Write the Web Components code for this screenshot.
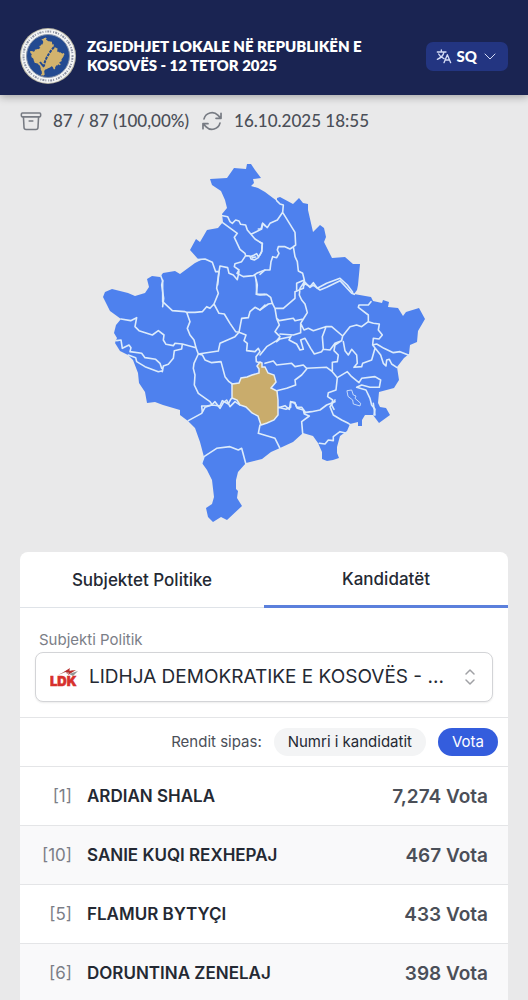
<!DOCTYPE html>
<html lang="sq">
<head>
<meta charset="utf-8">
<meta name="viewport" content="width=device-width, initial-scale=1">
<title>Zgjedhjet Lokale 2025</title>
<style>
  html {
    scrollbar-width: none;
  }

  body {
    margin: 0;
    background: #e9e9ea;
    color: #242933;
    font-family: Inter, "Liberation Sans", sans-serif;
  }

  main {
    padding: 16px 20px 0;
  }
</style>
</head>
<body>
<site-header>
  <span>ZGJEDHJET LOKALE NË REPUBLIKËN E KOSOVËS - 12 TETOR 2025</span>
  <language-button slot="action">SQ</language-button>
</site-header>
<main>
  <count-status>
    <span slot="counted">87 / 87 (100,00%)</span>
    <time slot="updated" datetime="2025-10-16T18:55">16.10.2025 18:55</time>
  </count-status>
  <municipality-map></municipality-map>
  <results-card>
    <party-select slot="filter"></party-select>
    <sort-bar slot="filter"></sort-bar>
    <candidate-table></candidate-table>
  </results-card>
</main>

<script>
const KOSOVO_OUTLINE = `M210 179 227 178 234 168 246 169 247 164 251 164 255 170 261 178 253 179 254 183 251 186
  258 188 265 192 277 201 277 198 280 197 293 204 299 198 303 203 308 204 308 210 313 232 320 225 324 228 326 237
  324 242 332 258 345 257 353 264 360 264 358 285 357 290 354 294 371 297 373 301 382 303 383 300 389 302 388 307
  398 308 403 316 406 312 419 308 425 319 418 331 417 342 410 345 409 354 404 358 397 367 399 380 394 388 379 392
  378 403 380 407 386 408 390 415 379 423 373 415 365 415 362 420 362 426 358 426 358 422 350 424 347 431 340 436
  337 447 337 453 339 458 333 460 327 461 322 459 322 452 318 443 313 436 303 433 293 442 280 448 271 452 262 459
  246 463 238 472 236 480 236 489 238 491 237 498 242 506 227 520 221 517 213 522 208 517 206 508 212 504 214 497
  212 480 207 470 202 463 204 457 200 442 195 428 188 421 180 415 180 410 163 405 155 402 147 403 145 392 139 383
  138 373 133 360 128 355 120 351 115 343 117 338 114 333 116 325 121 319 110 311 107 305 103 297 105 292 112 289
  128 293 135 296 145 293 149 287 147 279 152 276 160 277 163 273 175 271 180 274 195 263 201 260 198 259 190 250
  196 239 200 242 207 230 218 228 223 222 222 214 227 208 225 200 221 191 212 185Z`;

class SiteHeader extends HTMLElement {
  constructor() {
    super();
    this.attachShadow({ mode: 'open' });
  }

  connectedCallback() {
    this.shadowRoot.innerHTML = `
      <style>
        :host {
          display: block;
          background: #1a2452;
          color: #fff;
          box-shadow: 0 2px 8px rgba(0, 0, 0, 0.3);
        }

        header {
          display: flex;
          align-items: center;
          gap: 11px;
          padding: 28px 20px 11px;
        }

        svg {
          flex: none;
          width: 56px;
          height: 56px;
        }

        h1 {
          flex: 1;
          margin: 0;
          max-width: 296px;
          font: 800 15px/19px Lato, "Open Sans", sans-serif;
        }

        slot[name=action] {
          display: block;
          margin-left: auto;
        }
      </style>
      <header>
        <svg viewBox="0 0 56 56" aria-hidden="true">
          <circle cx="28" cy="28" r="28" fill="#b9b6a5"/>
          <circle cx="28" cy="28" r="27" fill="#f4f5f5"/>
          <circle cx="28" cy="28" r="24.5" fill="none" stroke="#8d93a3" stroke-width="2" stroke-dasharray="1 1 2 1 1 2"/>
          <circle cx="28" cy="28" r="21.5" fill="#234a91" stroke="#8794aa"/>
          <g transform="translate(-1 -8) scale(.107)">
            <path d="${KOSOVO_OUTLINE}" fill="#d2b36d"/>
          </g>
          <path d="M34 19C29 25 25 31 24 38" fill="none" stroke="#234a91" stroke-width="2" stroke-dasharray="3 1"/>
          <path d="M20 34l4 5" fill="none" stroke="#234a91" stroke-width="2"/>
        </svg>
        <h1><slot></slot></h1>
        <slot name="action"></slot>
      </header>
    `;
  }
}

class LanguageButton extends HTMLElement {
  constructor() {
    super();
    this.attachShadow({ mode: 'open' });
  }

  connectedCallback() {
    this.shadowRoot.innerHTML = `
      <style>
        :host {
          display: block;
        }

        button {
          display: flex;
          align-items: center;
          gap: 5px;
          height: 29px;
          padding: 0 10px;
          border: 0;
          border-radius: 7px;
          background: #233581;
          color: #fff;
          font: 900 15px/19px Lato, sans-serif;
        }

        svg {
          fill: none;
          stroke: #d5dcf5;
          stroke-linecap: round;
          stroke-linejoin: round;
        }
      </style>
      <button type="button">
        <svg width="16" height="16" viewBox="0 0 24 24" stroke-width="2" aria-hidden="true">
          <path d="M2 6h13M8 3v3M12 6c-1 5-5 9-10 11M4 9c2 4 5 6 8 7M12 22l5-12 5 12M14 18h6"/>
        </svg>
        <slot></slot>
        <svg width="16" height="16" viewBox="0 0 16 16" stroke-width="1" aria-hidden="true">
          <path d="M3 6l5 5 5-5"/>
        </svg>
      </button>
    `;
  }
}

class CountStatus extends HTMLElement {
  constructor() {
    super();
    this.attachShadow({ mode: 'open' });
  }

  connectedCallback() {
    this.shadowRoot.innerHTML = `
      <style>
        :host {
          display: flex;
          gap: 12px;
          color: #4b4f58;
          font: 500 17px/20px Lato, "Open Sans", sans-serif;
        }

        div {
          display: flex;
          align-items: center;
          gap: 11px;
        }

        svg {
          width: 22px;
          height: 22px;
          margin: -1px 0;
          fill: none;
          stroke: #777b83;
          stroke-width: 1.7;
          stroke-linecap: round;
          stroke-linejoin: round;
        }
      </style>
      <div>
        <svg viewBox="0 0 24 24" aria-hidden="true">
          <path d="M20.25 7.5l-.63 11.63a2.25 2.25 0 0 1-2.24 2.12H6.62a2.25 2.25 0 0 1-2.24-2.12L3.75 7.5M10 12h4M2.4 7.5h19.2c.6 0 .9-.5.9-1.1V4.4c0-.6-.5-1.1-1.1-1.1H2.6c-.6 0-1.1.5-1.1 1.1v2c0 .6.3 1.1.9 1.1z"/>
        </svg>
        <slot name="counted"></slot>
      </div>
      <div>
        <svg viewBox="1 1 22 22" aria-hidden="true">
          <path d="M16.02 9.35h5M2.98 19.64v-4.99h5m-5 0 3.18 3.18a8.25 8.25 0 0 0 13.8-3.7M4.03 9.87a8.25 8.25 0 0 1 13.8-3.7l3.19 3.18m0-5v5"/>
        </svg>
        <slot name="updated"></slot>
      </div>
    `;
  }
}

class MunicipalityMap extends HTMLElement {
  constructor() {
    super();
    this.attachShadow({ mode: 'open' });
  }

  connectedCallback() {
    this.shadowRoot.innerHTML = `
      <style>
        :host {
          display: block;
          padding: 24px 0 22px;
        }

        svg {
          display: block;
          width: 100%;
        }

        .land {
          fill: #4e81ee;
        }

        .selected {
          fill: #c9ac6c;
          stroke: #e3edf7;
          stroke-width: 1.5;
        }

        .borders {
          fill: none;
          stroke: #dcebfb;
          stroke-width: 4.8;
          stroke-linejoin: round;
          stroke-linecap: round;
        }
      </style>
      <svg viewBox="20 155 488 375" role="img" aria-label="Harta e komunave">
        <path class="land" d="${KOSOVO_OUTLINE}"/>
        <g class="borders">
          <!-- north west -->
          <path transform="translate(95 155) scale(.3333)" d="M383 182 398 185 405 200 412 205 422 195 432 198 437 208 452 210 457 225 468 238 500 222 503 205 510 212
            M383 203 427 235 418 247 435 283 450 295 452 302
            M468 238 480 252 502 266 500 290 490 308 478 315 468 312 465 303 452 302M465 305 478 300 485 296 490 305M472 308 482 306
            M452 302 440 320 420 326 418 335 432 345 426 355 445 365 475 362 485 355 510 345
            M308 314 330 312 352 322 362 350 372 350 375 333 398 338 402 355 415 360 427 374 432 350
            M372 350 368 390M197 362 203 378 200 390 206 430 203 455M480 362 487 390 484 418"/>
          <!-- north east -->
          <path transform="translate(260 155) scale(.3333)" d="M50 137 60 147 70 150 68 172 105 232 107 270 100 275 105 305 112 320 115 348 128 355 133 375 133 390
            M68 172 52 195 30 205 22 218 8 205 3 222 -5 222
            M105 272 90 282 75 275 55 275 52 285 57 295 50 308 38 305 33 320 30 345 15 345 0 358
            M0 262 7 265 5 290 0 300M110 405 110 385 133 375M133 385 150 395 160 383 172 400 200 385 240 370 262 390 278 412"/>
          <!-- west -->
          <path transform="translate(95 280) scale(.3333)" d="M203 0 203 65 232 92 270 95 275 97 300 97 322 95 335 80 345 85 357 72 362 60 370 40 365 25 372 -25
            M357 72 372 100 388 102 405 130 422 155 432 157
            M275 97 285 125 277 145 285 165 297 180 303 203
            M78 117 107 122 125 113 120 140 132 152 172 165 190 152 207 165 205 180 213 193 235 197 240 190 262 192 303 203
            M262 192 260 207 238 212 235 235 220 253 205 258 202 275
            M65 182 78 180 82 205 102 195 108 203 105 215 140 220 150 233 182 238 195 250 200 265
            M100 225 122 233 125 245 150 260 190 275 203 272
            M303 203 310 222 297 250 295 265 300 285 298 315 310 340 345 365 352 375 335 378 320 378 322 395
            M310 222 370 213 375 190 420 170 432 157
            M310 222 322 225 330 240 350 248 378 245 390 290 402 305 412 312
            M432 157 440 115 460 113 465 95 480 82 495 90 510 75
            M432 157 453 165 447 182 457 190 455 212 480 215 490 205 495 215
            M484 0 485 43 510 43M495 215 483 230 484 245 495 248
            M352 375 375 378 382 362 400 372 408 357 412 355"/>
          <!-- east -->
          <path transform="translate(260 280) scale(.3333)" d="M-10 43 0 45 20 43 32 52 37 70 45 85 70 85 105 55 105 35 130 25 133 0
            M0 90 25 72 38 70M45 85 50 115 58 122 100 115 105 122 130 117 142 98 135 72 125 60 118 45 120 25 133 5
            M133 5 150 22 160 15 180 30 200 22 240 2 275 40 283 43
            M50 115 58 135 45 155 60 170 50 182 20 200 0 225
            M130 117 122 130 122 158 100 165 60 162
            M50 185 60 177 92 170M95 165 87 180 110 192 120 210 130 208 122 180 135 175 152 205 163 222 185 215 190 207 187 170 197 143
            M122 130 132 150 145 145 160 152 197 140 215 140 248 168 245 182 225 190 210 210 190 208
            M248 168 270 140 290 135 305 140 325 125 340 130 358 132 355 150 367 165 357 177 340 175 338 195
            M333 65 325 75 297 75 295 82 325 105 325 125
            M338 195 350 192 372 205 400 218 420 215 447 226
            M338 195 350 210 362 225 370 250 378 258 380 240 388 238 395 252 410 262
            M345 205 335 240 308 250 305 260 282 262 292 250 290 225 275 208 265 225 255 212 250 185
            M245 182 225 195 222 212 235 225 232 245 217 247 217 275 232 293
            M15 250 40 243 50 255 95 250 105 260 130 255 140 265 200 262 217 275
            M140 267 125 285 105 300 107 315 80 325 50 332
            M232 293 262 275 275 290 297 308 305 295 345 290 362 300 358 322 330 322 305 315 290 322 318 330 330 355 335 375 345 388 342 405
            M232 293 228 330 205 338 203 350 218 360 215 375 222 388
            M55 383 75 377 88 388 92 365 105 368 110 382 125 382 135 395"/>
          <path transform="translate(260 280) scale(.3333)" stroke-width="2.5" d="M262 332 275 330 280 345 288 348 285 355 302 370 300 378 280 372 278 360 265 350Z"/>
          <!-- south -->
          <path transform="translate(180 400) scale(.3333)" d="M25 62 65 40 75 22 95 15 105 5 120 25 130 8 140 0 150 20 165 5 180 15
            M65 190 72 170 110 145 150 140 175 150 185 145 197 190
            M240 75 235 100 285 115 300 145
            M295 22 318 28 332 22 332 5 345 10 352 25 370 30 373 42 388 48 365 65 368 100
            M373 38 395 35 420 30 440 15 465 5M465 0 450 20 460 45 485 60 505 70 510 73
            M418 130 435 132 445 120 460 122 460 110 480 95 500 100M580 10 585 45"/>
        </g>
        <path class="selected" d="M232 384 239 383 241 378 247 377 252 375 259 373 259 369 257 366 260 362 262 363 262 367 265 367 268 373 274 375 276 382 271 388 277 391 278 400 278 415 274 420 267 423 261 425 258 416 252 413 246 407 240 405 237 400 232 398Z"/>
      </svg>
    `;
  }
}

class ResultsCard extends HTMLElement {
  constructor() {
    super();
    this.attachShadow({ mode: 'open' });
  }

  connectedCallback() {
    this.shadowRoot.innerHTML = `
      <style>
        :host {
          display: block;
          overflow: hidden;
          border-radius: 8px 8px 0 0;
          background: #fff;
        }

        [role=tablist] {
          display: grid;
          grid-template-columns: 1fr 1fr;
        }

        button {
          height: 56px;
          padding: 0;
          border: 0;
          border-bottom: 1px solid #dfe3e8;
          background: none;
          color: inherit;
          font: 500 17px/24px Inter, sans-serif;
        }

        button[aria-selected=true] {
          border-bottom: 3px solid #5b80dc;
        }
      </style>
      <div role="tablist">
        <button type="button" role="tab" aria-selected="false">Subjektet Politike</button>
        <button type="button" role="tab" aria-selected="true">Kandidatët</button>
      </div>
      <slot name="filter"></slot>
      <slot></slot>
    `;
  }
}

class PartySelect extends HTMLElement {
  constructor() {
    super();
    this.attachShadow({ mode: 'open' });
  }

  connectedCallback() {
    this.shadowRoot.innerHTML = `
      <style>
        :host {
          display: block;
          padding: 22px 15px 15px;
          border-bottom: 1px solid #e4e5e7;
        }

        label {
          display: block;
          padding: 0 4px 2px;
          color: #7b7e87;
          font-size: 15px;
          line-height: 20px;
        }

        .field {
          display: grid;
          align-items: center;
        }

        .field > * {
          grid-area: 1 / 1;
        }

        select {
          width: 100%;
          height: 50px;
          padding: 0 38px 0 53px;
          border: 1px solid #d3d4d7;
          border-radius: 8px;
          appearance: none;
          background: #fff;
          box-shadow: 0 1px 2px rgba(0, 0, 0, 0.08);
          color: #242933;
          font: 400 19px/28px Inter, sans-serif;
          text-overflow: ellipsis;
        }

        svg {
          pointer-events: none;
        }

        .logo {
          margin-left: 15px;
        }

        .arrows {
          justify-self: end;
          margin-right: 16px;
        }
      </style>
      <label for="party">Subjekti Politik</label>
      <div class="field">
        <select id="party">
          <option>LIDHJA DEMOKRATIKE E KOSOVËS - ...</option>
        </select>
        <svg class="logo" width="32" height="32" viewBox="0 -6 32 32" aria-hidden="true">
          <path d="M8 8 19 2l1 2 4-1-7 4-1-2z" fill="#b9716f"/>
          <path d="M14 5 20 1l-1 3 7-1-8 5 1-3z" fill="#b92e2d"/>
          <path d="M19 7 28 4l-5 5z" fill="#929596"/>
          <text x="0" y="19" fill="#d7312d" stroke="#d7312d" stroke-width=".5" font-family="Inter, sans-serif" font-size="13" font-weight="900">LDK</text>
        </svg>
        <svg class="arrows" width="14" height="18" viewBox="0 0 14 18" fill="none" stroke="#a0a1a5" stroke-width="1.5" stroke-linecap="round" stroke-linejoin="round" aria-hidden="true">
          <path d="M3 6l4-4 4 4M3 12l4 4 4-4"/>
        </svg>
      </div>
    `;
  }
}

class SortBar extends HTMLElement {
  constructor() {
    super();
    this.attachShadow({ mode: 'open' });
  }

  connectedCallback() {
    this.shadowRoot.innerHTML = `
      <style>
        :host {
          display: flex;
          align-items: center;
          justify-content: flex-end;
          gap: 12px;
          padding: 10px;
          color: #4b4f58;
          font-size: 15px;
          line-height: 20px;
        }

        button {
          height: 28px;
          padding: 0 14px;
          border: 0;
          border-radius: 14px;
          background: #f3f4f5;
          color: #242933;
          font: 400 15px/20px Inter, sans-serif;
        }

        button[aria-pressed=true] {
          background: #345ddd;
          color: #fff;
        }
      </style>
      <span>Rendit sipas:</span>
      <button type="button" aria-pressed="false">Numri i kandidatit</button>
      <button type="button" aria-pressed="true">Vota</button>
    `;
  }
}

class CandidateTable extends HTMLElement {
  constructor() {
    super();
    this.attachShadow({ mode: 'open' });
    this.candidates = [
      { number: 1, name: 'ARDIAN SHALA', votes: '7,274' },
      { number: 10, name: 'SANIE KUQI REXHEPAJ', votes: '467' },
      { number: 5, name: 'FLAMUR BYTYÇI', votes: '433' },
      { number: 6, name: 'DORUNTINA ZENELAJ', votes: '398' },
    ];
  }

  connectedCallback() {
    this.shadowRoot.innerHTML = `
      <style>
        :host {
          display: block;
        }

        table {
          width: 100%;
          border-spacing: 0;
        }

        tr:nth-child(even) {
          background: #f9f9fa;
        }

        th,
        td {
          height: 58px;
          padding: 0;
          border-top: 1px solid #e4e5e7;
          text-align: left;
        }

        .number {
          width: 52px;
          color: #7b7e87;
          font-size: 17px;
          text-align: right;
        }

        .name {
          padding-left: 15px;
          font-size: 17px;
          font-weight: 600;
        }

        .votes {
          padding-right: 20px;
          color: #4b4f58;
          font-size: 19px;
          font-weight: 600;
          text-align: right;
        }
      </style>
      <table aria-label="Kandidatët">
        <tbody>
          ${this.candidates.map((candidate) => `
            <tr>
              <td class="number">[${candidate.number}]</td>
              <th class="name" scope="row">${candidate.name}</th>
              <td class="votes">${candidate.votes} Vota</td>
            </tr>
          `).join('')}
        </tbody>
      </table>
    `;
  }
}

customElements.define('site-header', SiteHeader);
customElements.define('language-button', LanguageButton);
customElements.define('count-status', CountStatus);
customElements.define('municipality-map', MunicipalityMap);
customElements.define('results-card', ResultsCard);
customElements.define('party-select', PartySelect);
customElements.define('sort-bar', SortBar);
customElements.define('candidate-table', CandidateTable);
</script>
</body>
</html>
